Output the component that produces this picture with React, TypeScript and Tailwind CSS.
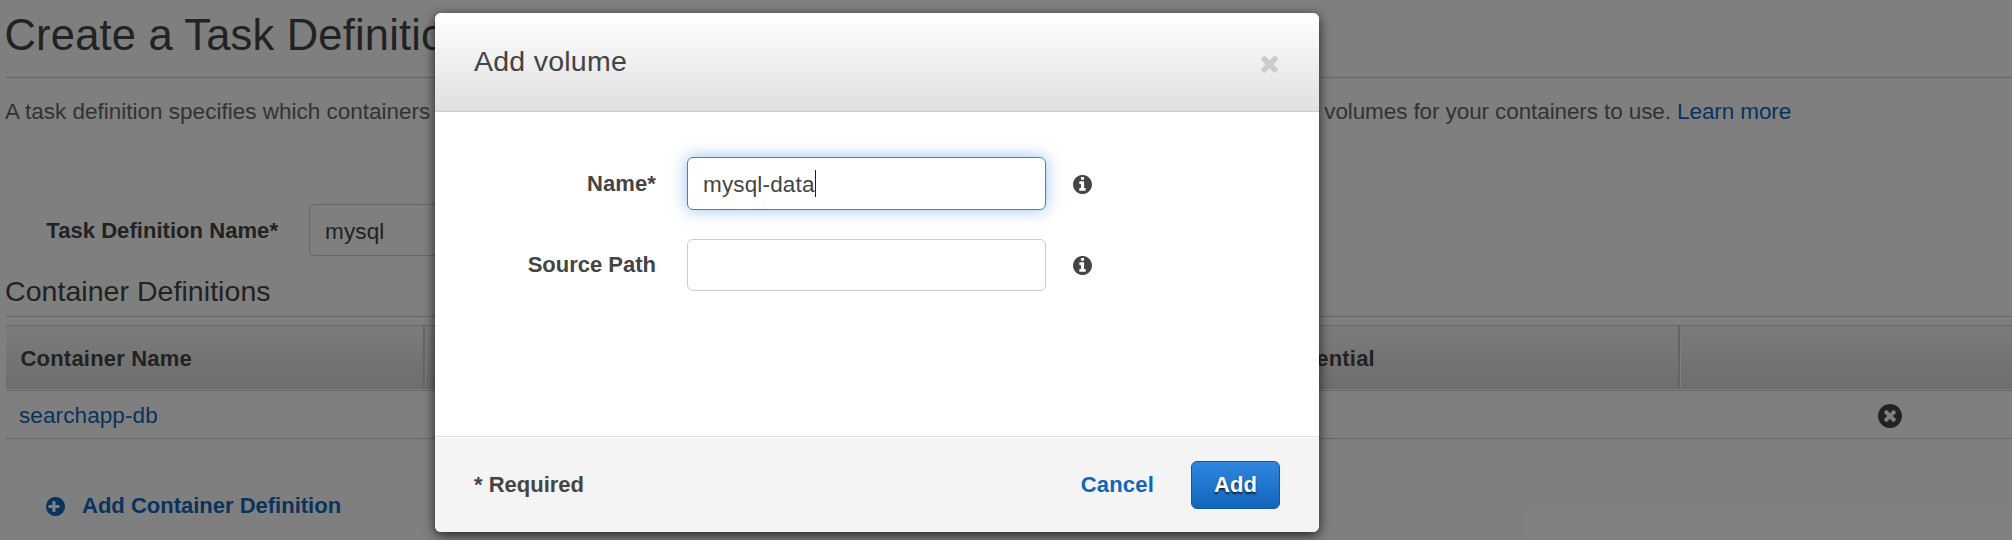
import React from 'react';

const ICONS = {
  plus:
    'M1216 960v-128q0-26-19-45t-45-19h-256v-256q0-26-19-45t-45-19h-128q-26 0-45 19t-19 45v256h-256q-26 0-45 19t-19 45v128q0 26 19 45t45 19h256v256q0 26 19 45t45 19h128q26 0 45-19t19-45v-256h256q26 0 45-19t19-45zm448-64q0 209-103 385.5t-279.5 279.5-385.5 103-385.5-103-279.5-279.5-103-385.5 103-385.5 279.5-279.5 385.5-103 385.5 103 279.5 279.5 103 385.5z',
  info:
    'M1152 1376v-160q0-14-9-23t-23-9h-96v-512q0-14-9-23t-23-9h-320q-14 0-23 9t-9 23v160q0 14 9 23t23 9h96v320h-96q-14 0-23 9t-9 23v160q0 14 9 23t23 9h448q14 0 23-9t9-23zm-128-896v-160q0-14-9-23t-23-9h-192q-14 0-23 9t-9 23v160q0 14 9 23t23 9h192q14 0 23-9t9-23zm640 416q0 209-103 385.5t-279.5 279.5-385.5 103-385.5-103-279.5-279.5-103-385.5 103-385.5 279.5-279.5 385.5-103 385.5 103 279.5 279.5 103 385.5z',
  remove:
    'M1277 1122q0-26-19-45l-181-181 181-181q19-19 19-45 0-27-19-46l-90-90q-19-19-46-19-26 0-45 19l-181 181-181-181q-19-19-45-19-27 0-46 19l-90 90q-19 19-19 46 0 26 19 45l181 181-181 181q-19 19-19 45 0 27 19 46l90 90q19 19 46 19 26 0 45-19l181-181 181 181q19 19 45 19 27 0 46-19l90-90q19-19 19-46zm387-226q0 209-103 385.5t-279.5 279.5-385.5 103-385.5-103-279.5-279.5-103-385.5 103-385.5 279.5-279.5 385.5-103 385.5 103 279.5 279.5 103 385.5z',
  times:
    'M1490 1322q0 40-28 68l-136 136q-28 28-68 28t-68-28l-294-294-294 294q-28 28-68 28t-68-28l-136-136q-28-28-28-68t28-68l294-294-294-294q-28-28-28-68t28-68l136-136q28-28 68-28t68 28l294 294 294-294q28-28 68-28t68 28l136 136q28 28 28 68t-28 68l-294 294 294 294q28 28 28 68z',
};

function Icon({ name, viewBox = '128 128 1536 1536', className }: { name: keyof typeof ICONS; viewBox?: string; className: string }) {
  return (
    <svg viewBox={viewBox} className={className} fill="currentColor" aria-hidden="true">
      <path d={ICONS[name]} />
    </svg>
  );
}

function HeaderCell({ children }: { children?: React.ReactNode }) {
  return (
    <div className="flex h-[62px] items-center border-r border-white pl-[14.5px] pt-[3px] shadow-[inset_-2px_0_0_#c8c8c8]">
      {children}
    </div>
  );
}

function Page() {
  return (
    <main className="pl-1.5 pt-3">
      <h1 className="h-[66px] border-b border-[#ccc] text-[43.5px] leading-[47px] tracking-[0.18px]">
        <span className="-ml-[1.5px]">Create a Task Definition</span>
      </h1>
      <p className="mt-[19px] flex whitespace-pre text-[#666]">
        <span className="-ml-px">A task definition specifies which containers</span>
        <span className="w-[894px] overflow-hidden tracking-[-0.25px]">
          {' '}are included in your task and how they interact with each other. You can also specify data
        </span>
        <span className="tracking-[-0.1px]">
          volumes for your containers to use. <a className="text-[#16b]">Learn more</a>
        </span>
      </p>
      <div className="mt-[77px] flex h-[52px] items-center">
        <label className="w-[272px] pt-px text-right text-[22px] font-bold tracking-[0.05px]">Task Definition Name*</label>
        <div className="ml-[31px] flex h-[52px] w-[360px] items-center rounded-md border border-[#ccc] pl-[15px] pt-[3px] tracking-[0.15px]">
          mysql
        </div>
      </div>
      <h2 className="mt-[17px] h-11 border-b border-[#ccc] text-[28.5px] leading-9 tracking-[0.05px]">
        <span className="-ml-px">Container Definitions</span>
      </h2>
      <section className="mt-2 w-[2093px]">
        <div className="grid h-[66px] grid-cols-[420px_418px_418px_419px_418px] border-y border-[#ccc] bg-gradient-to-b from-[#f8f8f8] to-[#dadada] text-[22px] font-bold tracking-[0.2px] shadow-[inset_0_-1px_0_#fff]">
          <HeaderCell>Container Name</HeaderCell>
          <HeaderCell>Image</HeaderCell>
          <HeaderCell>Memory</HeaderCell>
          <HeaderCell>Essential</HeaderCell>
          <HeaderCell />
        </div>
        <div className="grid h-12 grid-cols-[420px_418px_418px_419px_418px] items-center border-b border-[#ccc]">
          <a className="pl-[13px] pt-0.5 tracking-[0.1px] text-[#16b]">searchapp-db</a>
          <span />
          <span />
          <span />
          <button className="flex justify-center pt-[3px]">
            <Icon name="remove" className="size-6" />
          </button>
        </div>
      </section>
      <a className="ml-10 mt-[52px] flex items-center text-[22px] font-bold text-[#16b]">
        <Icon name="plus" className="mr-[17px] size-[19px]" />
        Add Container Definition
      </a>
    </main>
  );
}

function Modal() {
  return (
    <div className="flex h-[519px] w-[884px] flex-col overflow-hidden rounded-md bg-white shadow-[0_3px_12px_rgba(0,0,0,0.75)]">
      <header className="flex h-[99px] items-center justify-between border-b border-[#ccc] bg-gradient-to-b from-white to-[#e0e0e0] pl-[39px] pr-[41px]">
        <h2 className="-mt-[3px] text-[28.5px] leading-9 tracking-[0.25px]">Add volume</h2>
        <Icon name="times" viewBox="302 302 1188 1252" className="mt-[3px] h-[18px] w-[17px] text-[#ccc]" />
      </header>
      <div className="flex flex-1 flex-col pt-[45px]">
        <div className="flex h-[53px] items-center">
          <label className="w-[221px] text-right text-[22px] font-bold tracking-[0.1px]">Name*</label>
          <div className="ml-[31px] flex h-[53px] w-[359px] items-center rounded-md border border-[#3184db] pl-[15px] pt-[3px] shadow-[0_0_16px_rgba(49,132,219,0.5)]">
            <span className="tracking-[0.15px]">mysql-data</span>
            <span className="-mt-[3px] h-[27px] w-px bg-[#222]" />
          </div>
          <Icon name="info" className="ml-[27px] mt-px size-[19px]" />
        </div>
        <div className="mt-[29px] flex h-[52px] items-center">
          <label className="w-[221px] text-right text-[22px] font-bold">Source Path</label>
          <div className="ml-[31px] h-[52px] w-[359px] rounded-md border border-[#ccc]" />
          <Icon name="info" className="ml-[27px] mt-px size-[19px]" />
        </div>
      </div>
      <footer className="flex h-24 items-center border-t border-[#ddd] bg-[#f4f4f4] pl-[39px] pr-[39px] text-[22px] font-bold shadow-[inset_0_1px_0_#fff]">
        <span className="pt-px">* Required</span>
        <a className="ml-auto mr-[37px] pt-px tracking-[0.2px] text-[#16b]">Cancel</a>
        <button className="h-12 w-[89px] rounded-md border border-[#15a] bg-gradient-to-b from-[#2f86df] to-[#16b] pt-px text-white [text-shadow:0_2px_2px_rgba(0,0,0,0.7)]">
          Add
        </button>
      </footer>
    </div>
  );
}

export default function App() {
  return (
    <div className="relative h-[540px] w-full overflow-hidden bg-white font-['Liberation_Sans',Arial,sans-serif] text-[22.5px] leading-[30px] text-[#444]">
      <Page />
      <div className="absolute inset-0 bg-black/50 pl-[435px] pt-[13px]">
        <Modal />
      </div>
    </div>
  );
}
